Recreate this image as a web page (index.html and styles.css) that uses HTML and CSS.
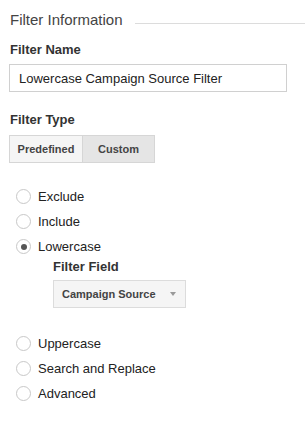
FILE: index.html
```html
<!DOCTYPE html>
<html lang="en">
<head>
    <meta charset="UTF-8">
    <title>Filter Information</title>
    <meta name="viewport" content="width=device-width, initial-scale=1.0">
    <link rel="stylesheet" href="styles.css">
</head>
<body>
<div class="panel">
    <div class="legend">
        <span class="legend-text">Filter Information</span>
        <span class="legend-line"></span>
    </div>

    <div class="label name-label">Filter Name</div>
    <input class="text-input" type="text" value="Lowercase Campaign Source Filter">

    <div class="label type-label">Filter Type</div>
    <div class="toggle">
        <button class="toggle-btn">Predefined</button>
        <button class="toggle-btn active">Custom</button>
    </div>

    <ul class="radios">
        <li class="radio-row"><span class="radio"></span>Exclude</li>
        <li class="radio-row"><span class="radio"></span>Include</li>
        <li class="radio-row"><span class="radio checked"></span>Lowercase</li>
        <li class="sub">
            <div class="label">Filter Field</div>
            <div class="select">
                <span>Campaign Source</span>
                <span class="caret"></span>
            </div>
        </li>
        <li class="radio-row"><span class="radio"></span>Uppercase</li>
        <li class="radio-row"><span class="radio"></span>Search and Replace</li>
        <li class="radio-row"><span class="radio"></span>Advanced</li>
    </ul>
</div>
</body>
</html>
```

FILE: styles.css
```css
html, body {
    margin: 0;
    background: #ffffff;
    font-family: "Liberation Sans", Arial, sans-serif;
    color: #222;
}
.panel {
    padding: 10px 0 0 9px;
}
.legend {
    display: flex;
    height: 20px;
    padding-left: 1px;
}
.legend-text {
    font-size: 15px;
    line-height: 20px;
    color: #444;
}
.legend-line {
    flex: 1;
    height: 1px;
    margin: 13px 0 0 12px;
    background: #dcdcdc;
}
.label {
    font-size: 13px;
    font-weight: bold;
    line-height: 16px;
    color: #333;
    padding-left: 1px;
}
.name-label {
    margin-top: 12px;
}
.text-input {
    display: block;
    box-sizing: border-box;
    width: 278px;
    height: 28px;
    margin: 6px 0 0;
    padding: 0 9px;
    border: 1px solid #d0d0d0;
    font-family: inherit;
    font-size: 13px;
    color: #222;
    outline: none;
}
.type-label {
    margin-top: 20px;
}
.toggle {
    display: flex;
    margin-top: 7px;
}
.toggle-btn {
    width: 74px;
    height: 28px;
    padding: 0;
    border: 1px solid #d6d6d6;
    background: #f5f5f5;
    font-family: inherit;
    font-size: 11px;
    font-weight: bold;
    color: #444;
}
.toggle-btn + .toggle-btn {
    border-left: none;
}
.toggle-btn.active {
    width: 72px;
    background: #e5e5e5;
}
.radios {
    list-style: none;
    margin: 21px 0 0;
    padding: 0 0 0 7px;
}
.radio-row {
    display: flex;
    align-items: center;
    height: 25px;
    font-size: 13px;
}
.radio {
    box-sizing: border-box;
    width: 15px;
    height: 15px;
    margin-right: 7px;
    border: 1px solid #c8c8c8;
    border-radius: 50%;
    background: #fff;
    display: flex;
    align-items: center;
    justify-content: center;
}
.radio.checked::after {
    content: "";
    width: 6px;
    height: 6px;
    border-radius: 50%;
    background: #555;
}
.sub {
    padding: 0 0 23px 37px;
}
.sub .label {
    padding-left: 0;
}
.select {
    display: flex;
    align-items: center;
    justify-content: space-between;
    box-sizing: border-box;
    width: 133px;
    height: 28px;
    margin-top: 5px;
    padding: 0 9px 0 8px;
    border: 1px solid #dcdcdc;
    background: #f5f5f5;
    font-size: 11px;
    font-weight: bold;
    color: #444;
}
.caret {
    width: 0;
    height: 0;
    border-left: 3.5px solid transparent;
    border-right: 3.5px solid transparent;
    border-top: 4px solid #999;
}
```
